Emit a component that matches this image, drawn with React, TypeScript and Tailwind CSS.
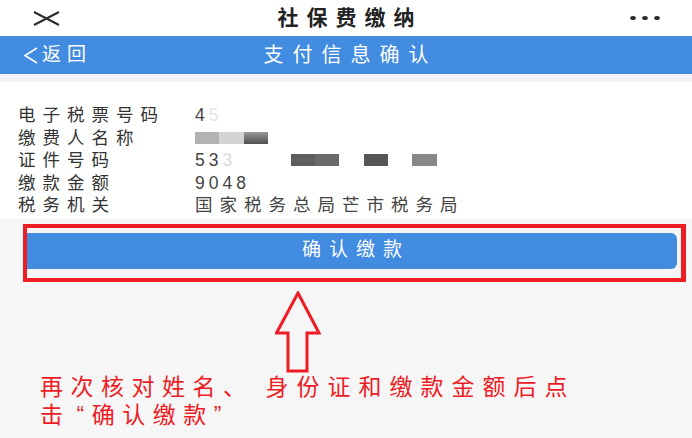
import React from 'react';

const cjk = { fontFamily: '"Liberation Sans", "Noto Sans CJK SC", sans-serif' };

const rows: { label: string; value: React.ReactNode }[] = [
  {
    label: '电子税票号码',
    value: (
      <span className="tracking-[4px]">
        4<span className="text-[#e6e6e6]">5</span>
      </span>
    ),
  },
  {
    label: '缴费人名称',
    value: (
      <span className="flex h-[22px] items-center">
        <span className="h-[12px] w-[24px] bg-[#b3b3b3]" />
        <span className="h-[12px] w-[25px] bg-[#d4d4d4]" />
        <span className="h-[12px] w-[24px] bg-gradient-to-b from-[#9a9a9a] to-[#4f4f4f]" />
      </span>
    ),
  },
  {
    label: '证件号码',
    value: (
      <span className="flex h-[22px] items-center">
        <span className="tracking-[4px]">
          53<span className="text-[#dcdcdc]">3</span>
        </span>
        <span className="ml-[55px] h-[12px] w-[24px] bg-[#5e5e5e]" />
        <span className="h-[12px] w-[24px] bg-[#6a6a6a]" />
        <span className="ml-[25px] h-[12px] w-[24px] bg-[#555555]" />
        <span className="ml-[24px] h-[12px] w-[25px] bg-[#878787]" />
      </span>
    ),
  },
  { label: '缴款金额', value: <span className="tracking-[4px]">9048</span> },
  { label: '税务机关', value: '国家税务总局芒市税务局' },
];

export default function App() {
  return (
    <div className="flex h-[438px] w-[692px] flex-col overflow-hidden bg-[#f6f6f6]" style={cjk}>
      {/* Window title bar */}
      <div className="flex h-[36px] items-center bg-white text-[#222]">
        <div className="flex w-[120px] pl-[33px]">
          <svg width="27" height="15" viewBox="0 0 27 15">
            <path d="M1 1 L26 14 M26 1 L1 14" stroke="#2b2b2b" strokeWidth="2" fill="none" />
          </svg>
        </div>
        <div className="flex-1 text-center text-[21px] font-bold leading-[24px] tracking-[8px] pl-[8px]">社保费缴纳</div>
        <div className="flex w-[120px] justify-end pr-[32px]">
          <svg width="30" height="6" viewBox="0 0 30 6">
            <ellipse cx="3" cy="3" rx="2.8" ry="2" fill="#2b2b2b" />
            <ellipse cx="15" cy="3" rx="2.8" ry="2" fill="#2b2b2b" />
            <ellipse cx="27" cy="3" rx="2.8" ry="2" fill="#2b2b2b" />
          </svg>
        </div>
      </div>

      {/* Blue nav bar */}
      <div className="flex h-[38px] items-center bg-[#418be1] text-white">
        <div className="flex w-[120px] items-center pl-[23px]">
          <svg width="16" height="17" viewBox="0 0 16 17">
            <path d="M14 1 L2 8.5 L14 16" stroke="#fff" strokeWidth="1.6" fill="none" />
          </svg>
          <span className="ml-[3px] text-[19px] leading-[24px] tracking-[6px]">返回</span>
        </div>
        <div className="flex-1 text-center text-[20px] leading-[24px] tracking-[9px] pl-[9px]">支付信息确认</div>
        <div className="w-[120px]" />
      </div>

      <div className="h-[8px] bg-[#f2f3f5]" />

      {/* Info card */}
      <div className="bg-white pb-[2px] pt-[22px]">
        {rows.map((r) => (
          <div key={r.label} className="flex h-[22.5px] items-center text-[17.5px] leading-[22px]">
            <div className="w-[195px] pl-[18px] tracking-[7px] text-[#333]">{r.label}</div>
            <div className="tracking-[7px] text-[#444]">{r.value}</div>
          </div>
        ))}
      </div>

      {/* Confirm button with red highlight */}
      <div className="ml-[23px] mr-[6px] mt-[5px] border-[4px] border-r-[5px] border-[#ee1c25] pb-[9px] pr-[4px] pt-[5px]">
        <button className="flex h-[36px] w-full items-center justify-center rounded-r-[6px] bg-[#418be1] pl-[8px] text-[19px] tracking-[8px] text-white">
          确认缴款
        </button>
      </div>

      {/* Arrow */}
      <div className="mt-[9px] flex pl-[275px]">
        <svg width="46" height="82" viewBox="0 0 46 82">
          <path
            d="M23 2 L44 42 L32 42 L32 80 L13 80 L13 42 L1.5 42 Z"
            stroke="#ee1c25"
            strokeWidth="3"
            strokeLinejoin="miter"
            fill="none"
          />
        </svg>
      </div>

      {/* Hint text */}
      <div className="pl-[40px] text-[23px] leading-[28px] tracking-[7.5px] text-[#ee1c25]">
        再次核对姓名、<span className="ml-[12px] tracking-[8px]">身份证和缴款金额后点</span>
        <br />击<span className="ml-[6px]">“确认缴款”</span>
      </div>
    </div>
  );
}
